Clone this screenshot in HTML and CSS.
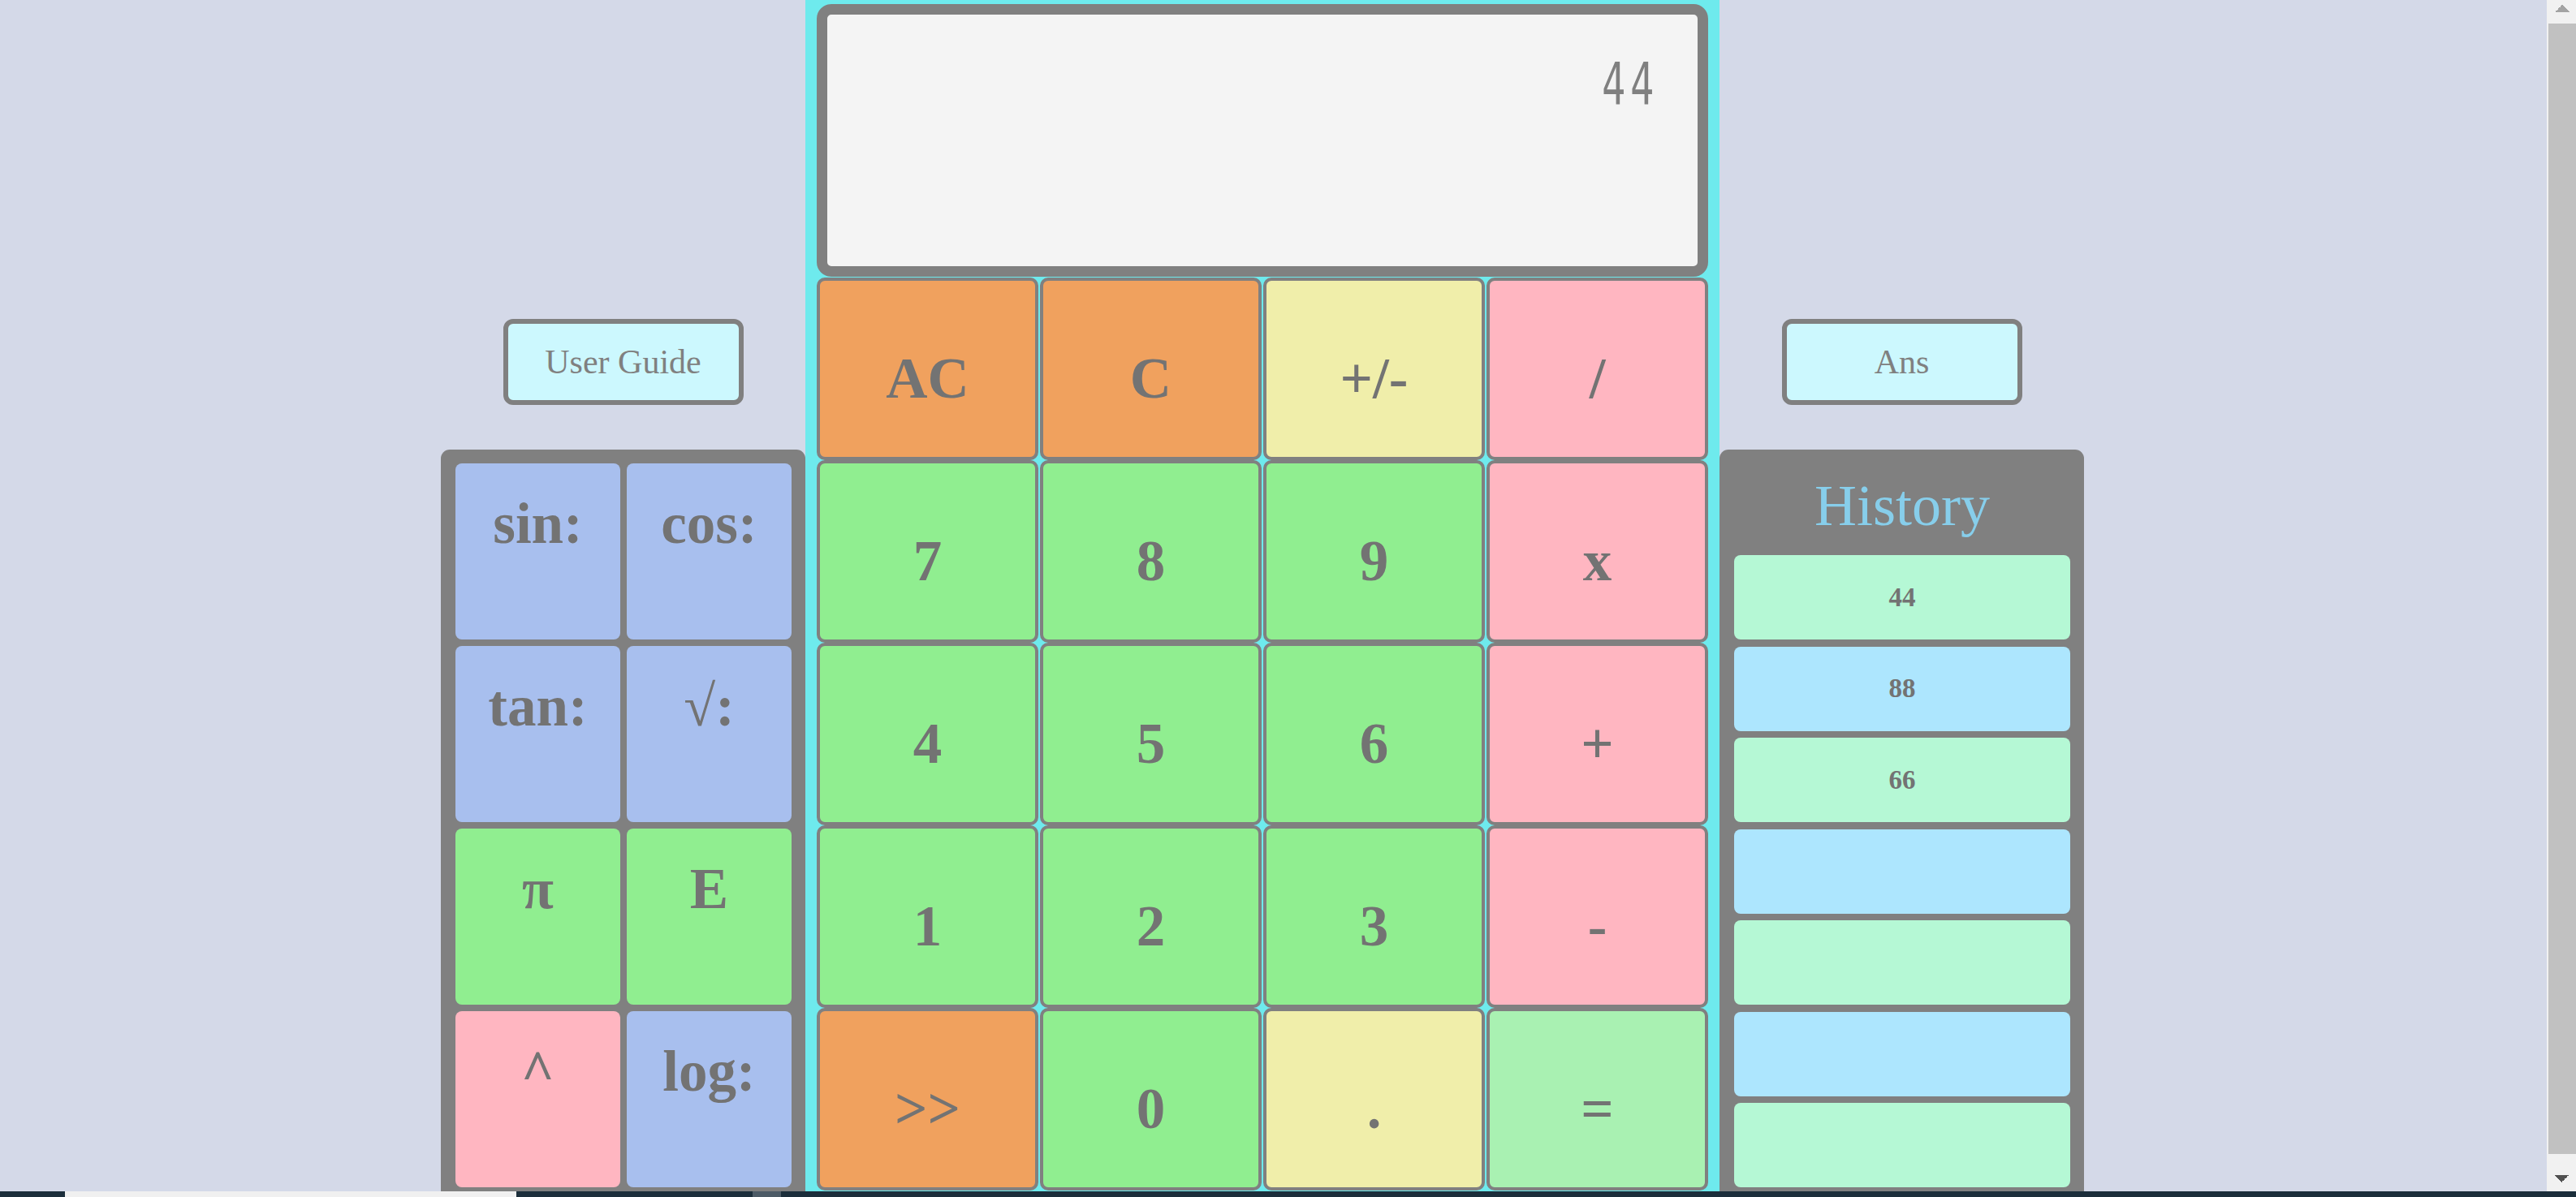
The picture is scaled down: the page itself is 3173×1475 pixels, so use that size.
FILE: index.html
```html
<!DOCTYPE html>
<html lang="en">
<head>
<meta charset="utf-8">
<title>Calculator</title>
<link rel="stylesheet" href="styles.css">
</head>
<body>
<div class="page">
  <aside class="side">
    <button class="pill">User Guide</button>
    <div class="panel sci-panel">
      <div class="sci-key blue">sin:</div>
      <div class="sci-key blue">cos:</div>
      <div class="sci-key blue">tan:</div>
      <div class="sci-key blue"><span class="thin">√</span>:</div>
      <div class="sci-key green">π</div>
      <div class="sci-key green">E</div>
      <div class="sci-key pink">^</div>
      <div class="sci-key blue">log:</div>
    </div>
  </aside>

  <main class="calc">
    <div class="display"><span class="display-value">44</span></div>
    <div class="keys">
      <div class="key orange">AC</div>
      <div class="key orange">C</div>
      <div class="key yellow">+/-</div>
      <div class="key pink">/</div>

      <div class="key green">7</div>
      <div class="key green">8</div>
      <div class="key green">9</div>
      <div class="key pink">x</div>

      <div class="key green">4</div>
      <div class="key green">5</div>
      <div class="key green">6</div>
      <div class="key pink">+</div>

      <div class="key green">1</div>
      <div class="key green">2</div>
      <div class="key green">3</div>
      <div class="key pink">-</div>

      <div class="key orange">&gt;&gt;</div>
      <div class="key green">0</div>
      <div class="key yellow">.</div>
      <div class="key mint">=</div>
    </div>
  </main>

  <aside class="side">
    <button class="pill">Ans</button>
    <div class="panel history-panel">
      <h2 class="history-title">History</h2>
      <ul class="history-list">
        <li class="history-item even">44</li>
        <li class="history-item odd">88</li>
        <li class="history-item even">66</li>
        <li class="history-item odd"></li>
        <li class="history-item even"></li>
        <li class="history-item odd"></li>
        <li class="history-item even"></li>
      </ul>
    </div>
  </aside>
</div>

<div class="scrollbar" aria-hidden="true">
  <div class="sb-btn sb-up"></div>
  <div class="sb-track"><div class="sb-thumb"></div></div>
  <div class="sb-btn sb-down"></div>
</div>
<div class="taskbar"></div>
</body>
</html>
```

FILE: styles.css
```css
html {
  background: #d4d9e8;
}

body {
  margin: 0;
  font-family: "Liberation Serif", "Times New Roman", serif;
  color: #737373;
}

.page {
  display: flex;
  align-items: flex-start;
  margin-left: 543px;
}

/* side columns */
.side {
  width: 449px;
  display: flex;
  flex-direction: column;
  align-items: center;
  padding-top: 393px;
}

.pill {
  width: 296px;
  height: 106px;
  box-sizing: border-box;
  border: 6px solid #808080;
  border-radius: 12px;
  background: #ccf8fe;
  color: #808080;
  font-family: "Liberation Serif", "Times New Roman", serif;
  font-size: 42px;
  padding: 0;
  margin: 0 0 55px;
}

.panel {
  align-self: stretch;
  background: #808080;
  border-radius: 11px 11px 0 0;
  padding: 17px 17px 17px 18px;
}

.sci-panel {
  display: grid;
  grid-template-columns: 1fr 1fr;
  grid-auto-rows: 217px;
  gap: 8px;
}

.sci-key {
  border-radius: 8px;
  font-weight: bold;
  font-size: 71px;
  text-align: center;
  padding-top: 34px;
  box-sizing: border-box;
}
.sci-key .thin {
  font-weight: normal;
}

/* calculator */
.calc {
  width: 1126px;
  box-sizing: border-box;
  background: #6eeaed;
  padding: 5px 14px 15px;
}

.display {
  height: 336px;
  box-sizing: border-box;
  border: 13px solid #808080;
  border-radius: 18px;
  background: #f4f4f4;
  text-align: right;
  padding: 44px 48px 0 0;
  font-family: "Liberation Sans Narrow", "DejaVu Sans Condensed", sans-serif;
  font-size: 71px;
  color: #808080;
  margin-bottom: 1px;
}

.display-value {
  display: inline-block;
  letter-spacing: 8px;
  transform: scaleX(0.72);
  transform-origin: right center;
}

.keys {
  display: grid;
  grid-template-columns: repeat(4, 1fr);
  grid-auto-rows: 225px;
  column-gap: 2px;
}

.key {
  border: 4px solid #808080;
  border-radius: 10px;
  font-weight: bold;
  font-size: 71px;
  text-align: center;
  padding-top: 80px;
  box-sizing: border-box;
}

.orange { background: #f0a15e; }
.yellow { background: #f0eeaa; }
.pink   { background: #ffb6c1; }
.green  { background: #90ee90; }
.mint   { background: #a9f1b2; }
.blue   { background: #a8bfee; }

/* history */
.history-title {
  margin: 11px 0 19px;
  font-size: 72px;
  font-weight: normal;
  line-height: normal;
  text-align: center;
  color: #87ceeb;
}

.history-list {
  list-style: none;
  margin: 0;
  padding: 0;
  display: flex;
  flex-direction: column;
  gap: 8.5px;
}

.history-item {
  height: 104px;
  border-radius: 8px;
  display: flex;
  align-items: center;
  justify-content: center;
  font-weight: bold;
  font-size: 33px;
}
.history-item.even { background: #b5f8d5; }
.history-item.odd  { background: #ade6fe; }

/* window chrome: vertical scrollbar overlay */
.scrollbar {
  position: fixed;
  top: 0;
  right: 0;
  bottom: 7px;
  width: 36px;
  display: flex;
  flex-direction: column;
  background: #f1f1f1;
}

.sb-btn {
  flex: none;
  background-repeat: no-repeat;
  background-size: 9px 9px;
}
.sb-up {
  height: 29px;
  background-image:
    linear-gradient(to top left, #a3a3a3 50%, transparent 50%),
    linear-gradient(to top right, #a3a3a3 50%, transparent 50%);
  background-position: 10px 6px, 19px 6px;
}
.sb-down {
  height: 29px;
  background-image:
    linear-gradient(to bottom left, #505050 50%, transparent 50%),
    linear-gradient(to bottom right, #505050 50%, transparent 50%);
  background-position: 9px 9px, 18px 9px;
}

.sb-track {
  flex: 1;
  display: flex;
  flex-direction: column;
  padding-left: 2px;
}
.sb-thumb {
  height: 1393px;
  background: #c1c1c1;
}

/* window chrome: bottom strip */
.taskbar {
  position: fixed;
  left: 0;
  right: 0;
  bottom: 0;
  height: 7px;
  background: linear-gradient(to right,
    #1c2e3b 0, #1c2e3b 80px,
    #f0f0f0 80px, #f0f0f0 636px,
    #1c2e3b 636px, #1c2e3b 927px,
    #4d5b66 927px, #4d5b66 962px,
    #1c2e3b 962px);
}
```
